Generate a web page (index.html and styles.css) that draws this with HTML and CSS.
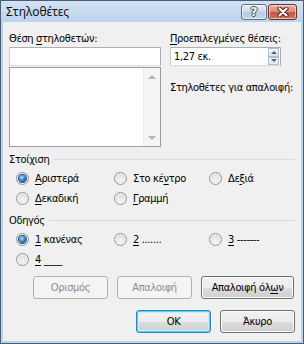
FILE: index.html
```html
<!DOCTYPE html>
<html lang="el">
<head>
<meta charset="utf-8">
<title>Στηλοθέτες</title>
<link rel="stylesheet" href="styles.css">
</head>
<body>
<div class="window">
  <div class="titlebar">
    <span class="title">Στηλοθέτες</span>
    <div class="caption-btns">
      <span class="cbtn help"><span class="qmark">?</span></span>
      <span class="cbtn close"><svg width="14" height="10" viewBox="0 0 14 10"><path d="M3.5 1.5 L10.5 8.5 M10.5 1.5 L3.5 8.5" stroke="#4a1f16" stroke-width="4.2" stroke-linecap="round"/><path d="M3.5 1.5 L10.5 8.5 M10.5 1.5 L3.5 8.5" stroke="#ffffff" stroke-width="2.2" stroke-linecap="round"/></svg></span>
    </div>
  </div>
  <div class="content">
    <div class="top">
      <div class="col col-left">
        <div class="label">Θέση <u>σ</u>τηλοθετών:</div>
        <div class="textbox"></div>
        <div class="listbox">
          <div class="list-area"></div>
          <div class="vscroll">
            <span class="sbtn"><span class="tri up"></span></span>
            <span class="strack"></span>
            <span class="sbtn"><span class="tri down"></span></span>
          </div>
        </div>
      </div>
      <div class="col col-right">
        <div class="label"><u>Π</u>ροεπιλεγμένες θέσεις:</div>
        <div class="spin">
          <span class="spin-val">1,27 εκ.</span>
          <div class="spin-btns">
            <span class="spbtn"><span class="stri up"></span></span>
            <span class="spbtn"><span class="stri down"></span></span>
          </div>
        </div>
        <div class="label clear-label">Στηλοθέτες για απαλοιφή:</div>
      </div>
    </div>

    <div class="group-head"><span>Στοίχιση</span><span class="rule"></span></div>
    <div class="radio-grid">
      <div class="opt"><span class="radio checked"></span><span><u>Α</u>ριστερά</span></div>
      <div class="opt"><span class="radio"></span><span>Στο κέ<u>ν</u>τρο</span></div>
      <div class="opt"><span class="radio"></span><span>Δε<u>ξ</u>ιά</span></div>
      <div class="opt"><span class="radio"></span><span><u>Δ</u>εκαδική</span></div>
      <div class="opt"><span class="radio"></span><span><u>Γ</u>ραμμή</span></div>
    </div>

    <div class="group-head second"><span>Οδηγός</span><span class="rule"></span></div>
    <div class="radio-grid">
      <div class="opt"><span class="radio checked"></span><span><u>1</u> κανένας</span></div>
      <div class="opt"><span class="radio"></span><span><u>2</u> .......</span></div>
      <div class="opt"><span class="radio"></span><span><u>3</u> -------</span></div>
      <div class="opt"><span class="radio"></span><span><u>4</u> ____</span></div>
    </div>

    <div class="btn-row">
      <span class="btn disabled">Ορισμός</span>
      <span class="btn disabled">Απαλοιφή</span>
      <span class="btn wide">Απαλοιφή όλ<u>ω</u>ν</span>
    </div>
    <div class="btn-row final">
      <span class="btn default">OK</span>
      <span class="btn">Άκυρο</span>
    </div>
  </div>
</div>
</body>
</html>
```

FILE: styles.css
```css
* { box-sizing: border-box; }
html, body { margin: 0; padding: 0; }
body {
  width: 304px;
  height: 344px;
  overflow: hidden;
  background: #ffffff;
  font-family: "DejaVu Sans Condensed", "DejaVu Sans", sans-serif;
  font-size: 11px;
  letter-spacing: -0.35px;
  color: #000;
}
u { text-underline-offset: 2px; text-decoration-thickness: 1px; }

.window {
  width: 304px;
  height: 344px;
  display: flex;
  flex-direction: column;
  background: #bcd3ec;
  border: 1px solid #4a5d74;
}
.titlebar {
  height: 21px;
  flex: none;
  display: flex;
  justify-content: space-between;
  align-items: flex-start;
  padding: 3px 6px 0 5px;
  background: linear-gradient(#d3e2f3, #bcd3ec);
}
.title {
  font-family: "Noto Sans", "Open Sans", sans-serif;
  font-size: 12px;
  letter-spacing: 0;
  line-height: 16px;
  color: #111;
}
.caption-btns { display: flex; gap: 1px; }
.cbtn {
  height: 16px;
  border-radius: 3px;
  display: flex;
  align-items: center;
  justify-content: center;
  box-shadow: inset 0 0 0 1px rgba(255,255,255,0.55);
}
.help {
  width: 26px;
  border: 1px solid #5d6f86;
  background: linear-gradient(#e6eef7, #cbdaea 50%, #b6cbe1 51%, #c3d6ea);
}
.qmark {
  font-family: "DejaVu Sans", sans-serif;
  font-weight: bold;
  font-size: 12px;
  letter-spacing: 0;
  line-height: 12px;
  color: #fff;
  text-shadow: 1px 0 #3a4c63, -1px 0 #3a4c63, 0 1px #3a4c63, 0 -1px #3a4c63;
}
.close {
  width: 29px;
  border: 1px solid #6a3024;
  background: linear-gradient(#eab1a3, #d98a77 50%, #c8563f 51%, #d2765f);
}

.content {
  flex: 1;
  margin: 0 2px 2px 2px;
  background: #f0f0f0;
  padding: 10px 6px 0 6px;
  display: flex;
  flex-direction: column;
}
.label { height: 13px; line-height: 13px; white-space: nowrap; }

.top { display: flex; gap: 9px; }
.col { display: flex; flex-direction: column; }
.col-left { width: 152px; }
.col-right { width: 111px; }

.textbox {
  margin-top: 2px;
  height: 19px;
  background: #fff;
  border: 1px solid #abadb3;
  border-left-color: #c9cbd0;
  border-bottom-color: #d9dce1;
}
.listbox {
  margin-top: 1px;
  height: 80px;
  background: #fff;
  border: 1px solid #9a9ea4;
  display: flex;
}
.list-area { flex: 1; }
.vscroll {
  width: 17px;
  display: flex;
  flex-direction: column;
  background: #f4f4f4;
  border-left: 1px solid #ececec;
}
.sbtn {
  height: 17px;
  display: flex;
  align-items: center;
  justify-content: center;
}
.strack { flex: 1; }
.tri { width: 0; height: 0; border-left: 4px solid transparent; border-right: 4px solid transparent; }
.tri.up { border-bottom: 4px solid #b4b4b4; }
.tri.down { border-top: 4px solid #b4b4b4; }

.spin {
  margin-top: 2px;
  height: 19px;
  background: #fff;
  border: 1px solid #abadb3;
  border-left-color: #c9cbd0;
  border-bottom-color: #d9dce1;
  display: flex;
  align-items: center;
  padding: 0 1px 0 3px;
}
.spin-val { flex: 1; line-height: 13px; }
.spin-btns { display: flex; flex-direction: column; gap: 0; height: 17px; }
.spbtn {
  width: 11px;
  height: 8.5px;
  border: 1px solid #b3bccb;
  background: linear-gradient(#f4f7fb, #dde5ef);
  display: flex;
  align-items: center;
  justify-content: center;
}
.stri { width: 0; height: 0; border-left: 3px solid transparent; border-right: 3px solid transparent; }
.stri.up { border-bottom: 3px solid #4a6186; }
.stri.down { border-top: 3px solid #4a6186; }

.clear-label { margin-top: 15px; }

.group-head {
  margin-top: 6px;
  height: 13px;
  line-height: 13px;
  display: flex;
  align-items: center;
  gap: 4px;
  padding-right: 0;
}
.group-head.second { margin-top: 6px; }
.rule { flex: 1; height: 1px; background: #d5dfe5; }

.radio-grid {
  margin-top: 2px;
  display: grid;
  grid-template-columns: 98px 95px auto;
  grid-auto-rows: 20px;
  padding-left: 7px;
}
.opt { display: flex; align-items: center; gap: 6px; white-space: nowrap; }
.radio {
  width: 13px;
  height: 13px;
  flex: none;
  border-radius: 50%;
  border: 1px solid #939393;
  background: radial-gradient(circle at 50% 65%, #f6f6f6 0%, #e2e2e2 55%, #d0d0d0 100%);
  box-shadow: inset 0 0 0 1px #f8f8f8;
  display: flex;
  align-items: center;
  justify-content: center;
}
.radio.checked::after {
  content: "";
  width: 7px;
  height: 7px;
  border-radius: 50%;
  background: radial-gradient(circle at 40% 35%, #c4e6ff 0%, #4b9be0 35%, #1a5ea9 70%, #0f3e78 100%);
  box-shadow: 0 0 0 1px #1c4f86;
}

.btn-row {
  margin-top: 7px;
  display: flex;
  gap: 9px;
  padding-left: 24px;
}
.btn-row.final {
  margin-top: 11px;
  justify-content: flex-end;
  padding-left: 0;
  padding-right: 0;
}
.btn {
  width: 75px;
  height: 23px;
  border: 1px solid #707070;
  border-radius: 3px;
  background: linear-gradient(#f2f2f2 0%, #ebebeb 50%, #dddddd 51%, #cfcfcf 100%);
  box-shadow: inset 0 0 0 1px #fcfcfc;
  display: flex;
  align-items: center;
  justify-content: center;
  white-space: nowrap;
}
.btn.wide { width: 93px; }
.btn.disabled {
  border-color: #adb2b5;
  background: #f4f4f4;
  box-shadow: none;
  color: #8c8c8c;
}
.btn.default {
  border-color: #3c7fb1;
  box-shadow: inset 0 0 0 1px #48d8fb, inset 0 0 0 2px #c6eefc;
}
```
